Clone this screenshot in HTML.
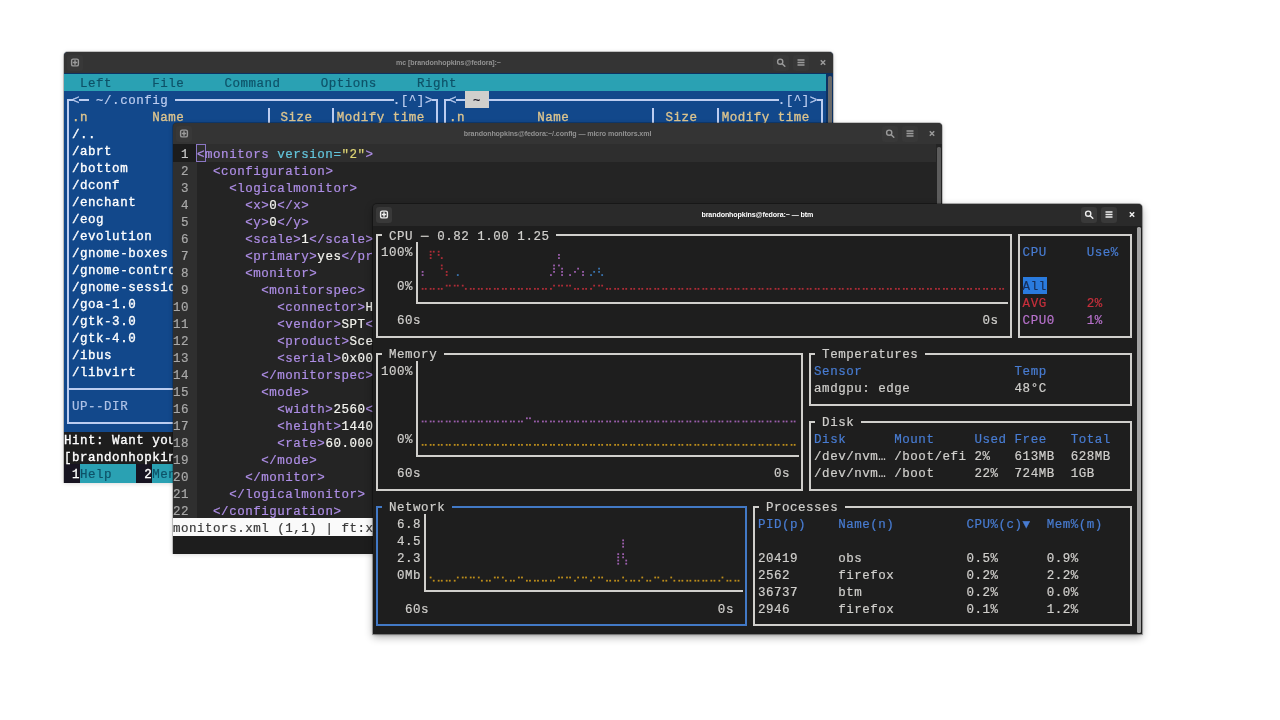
<!DOCTYPE html>
<html lang="en"><head><meta charset="utf-8"><title>Terminal windows: mc, micro, btm</title>
<style>
html,body{margin:0;padding:0}
body{width:1280px;height:720px;overflow:hidden;background:#fff;position:relative;font-family:"Liberation Mono", "DejaVu Sans Mono", monospace;font-size:12.5px;line-height:16.98px;color:#d0cfcc;letter-spacing:0.519px}
.win{position:absolute;border-radius:4px 4px 0 0;overflow:visible}
.term,.tt{will-change:transform}
.clip{position:absolute;left:0;top:0;right:0;bottom:0;overflow:hidden;border-radius:4px 4px 0 0}
.tbw{position:absolute;left:0;top:0;right:0;height:22px;border-radius:4px 4px 0 0}
.tb{position:absolute;left:0;top:0;right:0;height:22px}
.tt{position:absolute;left:0;right:0;top:0;height:22px;line-height:22px;text-align:center;font-family:"Liberation Sans","DejaVu Sans",sans-serif;font-weight:bold;font-size:7.1px;letter-spacing:-0.1px;white-space:nowrap}
.btn{position:absolute;border-radius:3px}
.btn svg{display:block}
.term{position:absolute;width:763px;height:410px;overflow:hidden}
.term div{position:absolute}
.term span{position:absolute;display:block;white-space:pre;height:17px;line-height:17px;-webkit-text-stroke:0.2px currentColor}
.term span.b{-webkit-text-stroke:0.34px currentColor}

.dots{position:absolute;left:0;top:0;opacity:.85}
.sb{position:absolute;border-radius:1.5px}
</style></head><body>
<div class="win" style="left:64px;top:51.75px;width:769px;height:430.25px;background:#0d3262;box-shadow:0 0 0 1px rgba(0,0,0,.2),0 1px 5px rgba(0,0,0,.2)">
<div class="tbw" style="background:#343434;height:21.55px">
<div class="tb">
<div class="btn" style="left:3px;top:3.3px;width:16px;height:16px;background:#383838">
<svg width="16" height="16" viewBox="-0.5 0 16 16"><rect x="4.1" y="4.1" width="6.8" height="6.8" rx="1.5" fill="none" stroke="#9a9a9a" stroke-width="1.4"/><path d="M7.5 5.3v4.4M5.3 7.5h4.4" stroke="#9a9a9a" stroke-width="1.5" fill="none"/></svg></div>
<div class="tt" style="color:#919191;top:0px">mc [brandonhopkins@fedora]:~</div>
<div class="btn" style="right:44.4px;top:3.3px;width:16px;height:16px;background:#383838">
<svg width="16" height="16" viewBox="-0.5 0 16 16"><circle cx="6.7" cy="6.7" r="2.6" fill="none" stroke="#9a9a9a" stroke-width="1.4"/><path d="M8.7 8.7l2.6 2.6" stroke="#9a9a9a" stroke-width="1.5" stroke-linecap="round"/></svg></div>
<div class="btn" style="right:24.3px;top:3.3px;width:16px;height:16px;background:#383838">
<svg width="16" height="16" viewBox="-0.5 0 16 16"><path d="M4 5h7M4 7.5h7M4 10h7" stroke="#9a9a9a" stroke-width="1.4"/></svg></div>
<div class="btn" style="right:1.8px;top:3.1px;width:16px;height:16px">
<svg width="16" height="16" viewBox="-0.5 0 16 16"><path d="M5.3 5.3l4.4 4.4M9.7 5.3l-4.4 4.4" stroke="#9a9a9a" stroke-width="1.5"/></svg></div>
</div>
</div>
<div class="term mc" style="left:0px;top:21.25px">
<div style="left:0px;top:0.75px;width:762px;height:16.98px;background:#2aa1b3"></div>
<div style="left:0px;top:17.73px;width:762px;height:340.8px;background:#12488b"></div>
<div style="left:0px;top:358.53px;width:762px;height:32.96px;background:#1d1d1d"></div>
<div style="left:0px;top:391.29px;width:762px;height:18.98px;background:#171421"></div>
<div style="left:3.01px;top:26.02px;width:2px;height:324.62px;background:#bccdf0"></div>
<div style="left:371.93px;top:26.02px;width:2px;height:324.62px;background:#bccdf0"></div>
<div style="left:3.01px;top:348.64px;width:370.92px;height:2px;background:#bccdf0"></div>
<div style="left:3.01px;top:314.68px;width:370.92px;height:2px;background:#bccdf0"></div>
<div style="left:3.01px;top:26.02px;width:6.01px;height:2px;background:#bccdf0"></div>
<div style="left:15.04px;top:26.02px;width:10.02px;height:2px;background:#bccdf0"></div>
<div style="left:111.28px;top:26.02px;width:218.54px;height:2px;background:#bccdf0"></div>
<div style="left:367.92px;top:26.02px;width:6.01px;height:2px;background:#bccdf0"></div>
<div style="left:203.51px;top:34.51px;width:2px;height:273.68px;background:#bccdf0"></div>
<div style="left:267.67px;top:34.51px;width:2px;height:273.68px;background:#bccdf0"></div>
<div style="left:379.95px;top:26.02px;width:2px;height:324.62px;background:#bccdf0"></div>
<div style="left:756.89px;top:26.02px;width:2px;height:324.62px;background:#bccdf0"></div>
<div style="left:379.95px;top:348.64px;width:378.94px;height:2px;background:#bccdf0"></div>
<div style="left:379.95px;top:314.68px;width:378.94px;height:2px;background:#bccdf0"></div>
<div style="left:379.95px;top:26.02px;width:6.01px;height:2px;background:#bccdf0"></div>
<div style="left:391.98px;top:26.02px;width:10.02px;height:2px;background:#bccdf0"></div>
<div style="left:401px;top:17.73px;width:24.06px;height:16.98px;background:#d0cfcc"></div>
<div style="left:424.06px;top:26.02px;width:290.72px;height:2px;background:#bccdf0"></div>
<div style="left:752.88px;top:26.02px;width:6.01px;height:2px;background:#bccdf0"></div>
<div style="left:588.47px;top:34.51px;width:2px;height:273.68px;background:#bccdf0"></div>
<div style="left:652.63px;top:34.51px;width:2px;height:273.68px;background:#bccdf0"></div>
<div style="left:16.04px;top:391.29px;width:56.14px;height:18.98px;background:#2aa1b3"></div>
<div style="left:88.22px;top:391.29px;width:56.14px;height:18.98px;background:#2aa1b3"></div>
<span style="left:16.04px;top:3.25px;color:#0e5268">Left</span>
<span style="left:88.22px;top:3.25px;color:#0e5268">File</span>
<span style="left:160.4px;top:3.25px;color:#0e5268">Command</span>
<span style="left:256.64px;top:3.25px;color:#0e5268">Options</span>
<span style="left:352.88px;top:3.25px;color:#0e5268">Right</span>
<span style="left:8.02px;top:20.23px;color:#bccdf0">&lt;</span>
<span style="left:32.08px;top:20.23px;color:#bccdf0">~/.config</span>
<span style="left:328.82px;top:20.23px;color:#bccdf0">.[^]&gt;</span>
<span class="b" style="left:8.02px;top:37.21px;color:#dcc48e">.n</span>
<span class="b" style="left:88.22px;top:37.21px;color:#dcc48e">Name</span>
<span class="b" style="left:216.54px;top:37.21px;color:#dcc48e">Size</span>
<span class="b" style="left:272.68px;top:37.21px;color:#dcc48e">Modify</span>
<span class="b" style="left:328.82px;top:37.21px;color:#dcc48e">time</span>
<span style="left:384.96px;top:20.23px;color:#bccdf0">&lt;</span>
<span style="left:409.02px;top:20.23px;color:#171421">~</span>
<span style="left:713.78px;top:20.23px;color:#bccdf0">.[^]&gt;</span>
<span class="b" style="left:384.96px;top:37.21px;color:#dcc48e">.n</span>
<span class="b" style="left:473.18px;top:37.21px;color:#dcc48e">Name</span>
<span class="b" style="left:601.5px;top:37.21px;color:#dcc48e">Size</span>
<span class="b" style="left:657.64px;top:37.21px;color:#dcc48e">Modify</span>
<span class="b" style="left:713.78px;top:37.21px;color:#dcc48e">time</span>
<span class="b" style="left:8.02px;top:54.19px;color:#ffffff">/..</span>
<span class="b" style="left:8.02px;top:71.17px;color:#ffffff">/abrt</span>
<span class="b" style="left:8.02px;top:88.15px;color:#ffffff">/bottom</span>
<span class="b" style="left:8.02px;top:105.13px;color:#ffffff">/dconf</span>
<span class="b" style="left:8.02px;top:122.11px;color:#ffffff">/enchant</span>
<span class="b" style="left:8.02px;top:139.09px;color:#ffffff">/eog</span>
<span class="b" style="left:8.02px;top:156.07px;color:#ffffff">/evolution</span>
<span class="b" style="left:8.02px;top:173.05px;color:#ffffff">/gnome-boxes</span>
<span class="b" style="left:8.02px;top:190.03px;color:#ffffff">/gnome-contro</span>
<span class="b" style="left:8.02px;top:207.01px;color:#ffffff">/gnome-sessio</span>
<span class="b" style="left:8.02px;top:223.99px;color:#ffffff">/goa-1.0</span>
<span class="b" style="left:8.02px;top:240.97px;color:#ffffff">/gtk-3.0</span>
<span class="b" style="left:8.02px;top:257.95px;color:#ffffff">/gtk-4.0</span>
<span class="b" style="left:8.02px;top:274.93px;color:#ffffff">/ibus</span>
<span class="b" style="left:8.02px;top:291.91px;color:#ffffff">/libvirt</span>
<span style="left:8.02px;top:325.87px;color:#aec2e6">UP--DIR</span>
<span class="b" style="left:0px;top:359.83px;color:#ffffff">Hint:</span>
<span class="b" style="left:48.12px;top:359.83px;color:#ffffff">Want</span>
<span class="b" style="left:88.22px;top:359.83px;color:#ffffff">you</span>
<span class="b" style="left:0px;top:376.81px;color:#ffffff">[brandonhopkin</span>
<span class="b" style="left:8.02px;top:393.79px;color:#ffffff">1</span>
<span style="left:16.04px;top:393.79px;color:#0e5268">Help</span>
<span class="b" style="left:80.2px;top:393.79px;color:#ffffff">2</span>
<span style="left:88.22px;top:393.79px;color:#0e5268">Menu</span>
</div>
<div class="sb" style="left:764px;top:24px;width:4px;height:400px;background:#6a6a6a"></div>
</div>
<div class="win" style="left:173px;top:122.5px;width:769px;height:430px;background:#242424;box-shadow:0 0 0 1px rgba(0,0,0,.2),0 1px 5px rgba(0,0,0,.2)">
<div class="tbw" style="background:#343434;height:21.8px">
<div class="tb">
<div class="btn" style="left:3px;top:3.3px;width:16px;height:16px;background:#383838">
<svg width="16" height="16" viewBox="-0.5 0 16 16"><rect x="4.1" y="4.1" width="6.8" height="6.8" rx="1.5" fill="none" stroke="#9a9a9a" stroke-width="1.4"/><path d="M7.5 5.3v4.4M5.3 7.5h4.4" stroke="#9a9a9a" stroke-width="1.5" fill="none"/></svg></div>
<div class="tt" style="color:#919191;top:0px">brandonhopkins@fedora:~/.config — micro monitors.xml</div>
<div class="btn" style="right:44.4px;top:3.3px;width:16px;height:16px;background:#383838">
<svg width="16" height="16" viewBox="-0.5 0 16 16"><circle cx="6.7" cy="6.7" r="2.6" fill="none" stroke="#9a9a9a" stroke-width="1.4"/><path d="M8.7 8.7l2.6 2.6" stroke="#9a9a9a" stroke-width="1.5" stroke-linecap="round"/></svg></div>
<div class="btn" style="right:24.3px;top:3.3px;width:16px;height:16px;background:#383838">
<svg width="16" height="16" viewBox="-0.5 0 16 16"><path d="M4 5h7M4 7.5h7M4 10h7" stroke="#9a9a9a" stroke-width="1.4"/></svg></div>
<div class="btn" style="right:1.8px;top:3.1px;width:16px;height:16px">
<svg width="16" height="16" viewBox="-0.5 0 16 16"><path d="M5.3 5.3l4.4 4.4M9.7 5.3l-4.4 4.4" stroke="#9a9a9a" stroke-width="1.5"/></svg></div>
</div>
</div>
<div class="term " style="left:0px;top:21.5px">
<div style="left:0px;top:0.5px;width:24.06px;height:373.56px;background:#2f2f2f"></div>
<div style="left:0;top:0;width:24.06px;height:18px;background:#1c1c1c"></div>
<div style="left:24.06px;top:0;width:770px;height:18px;background:#2e2e2e"></div>
<div style="left:0px;top:374.46px;width:770px;height:17.28px;background:#fafafa"></div>
<div style="left:0px;top:391.74px;width:770px;height:17.98px;background:#1d1d1d"></div>
<div style="left:23.06px;top:0.2px;width:9.62px;height:18.18px;border:1.3px solid #8a76c4;box-sizing:border-box"></div>
<span style="left:8.02px;top:3px;color:#c9c9c9">1</span>
<span style="left:24.06px;top:3px;color:#ae8ee6">&lt;monitors</span>
<span style="left:104.26px;top:3px;color:#63c5dc">version=</span>
<span style="left:168.42px;top:3px;color:#dfd574">"2"</span>
<span style="left:192.48px;top:3px;color:#ae8ee6">&gt;</span>
<span style="left:8.02px;top:19.98px;color:#a9a9a9">2</span>
<span style="left:40.1px;top:19.98px;color:#ae8ee6">&lt;configuration&gt;</span>
<span style="left:8.02px;top:36.96px;color:#a9a9a9">3</span>
<span style="left:56.14px;top:36.96px;color:#ae8ee6">&lt;logicalmonitor&gt;</span>
<span style="left:8.02px;top:53.94px;color:#a9a9a9">4</span>
<span style="left:72.18px;top:53.94px;color:#ae8ee6">&lt;x&gt;</span>
<span style="left:96.24px;top:53.94px;color:#f4f4ef">0</span>
<span style="left:104.26px;top:53.94px;color:#ae8ee6">&lt;/x&gt;</span>
<span style="left:8.02px;top:70.92px;color:#a9a9a9">5</span>
<span style="left:72.18px;top:70.92px;color:#ae8ee6">&lt;y&gt;</span>
<span style="left:96.24px;top:70.92px;color:#f4f4ef">0</span>
<span style="left:104.26px;top:70.92px;color:#ae8ee6">&lt;/y&gt;</span>
<span style="left:8.02px;top:87.9px;color:#a9a9a9">6</span>
<span style="left:72.18px;top:87.9px;color:#ae8ee6">&lt;scale&gt;</span>
<span style="left:128.32px;top:87.9px;color:#f4f4ef">1</span>
<span style="left:136.34px;top:87.9px;color:#ae8ee6">&lt;/scale&gt;</span>
<span style="left:8.02px;top:104.88px;color:#a9a9a9">7</span>
<span style="left:72.18px;top:104.88px;color:#ae8ee6">&lt;primary&gt;</span>
<span style="left:144.36px;top:104.88px;color:#f4f4ef">yes</span>
<span style="left:168.42px;top:104.88px;color:#ae8ee6">&lt;/pr</span>
<span style="left:8.02px;top:121.86px;color:#a9a9a9">8</span>
<span style="left:72.18px;top:121.86px;color:#ae8ee6">&lt;monitor&gt;</span>
<span style="left:8.02px;top:138.84px;color:#a9a9a9">9</span>
<span style="left:88.22px;top:138.84px;color:#ae8ee6">&lt;monitorspec&gt;</span>
<span style="left:0px;top:155.82px;color:#a9a9a9">10</span>
<span style="left:104.26px;top:155.82px;color:#ae8ee6">&lt;connector&gt;</span>
<span style="left:192.48px;top:155.82px;color:#f4f4ef">H</span>
<span style="left:0px;top:172.8px;color:#a9a9a9">11</span>
<span style="left:104.26px;top:172.8px;color:#ae8ee6">&lt;vendor&gt;</span>
<span style="left:168.42px;top:172.8px;color:#f4f4ef">SPT</span>
<span style="left:192.48px;top:172.8px;color:#ae8ee6">&lt;</span>
<span style="left:0px;top:189.78px;color:#a9a9a9">12</span>
<span style="left:104.26px;top:189.78px;color:#ae8ee6">&lt;product&gt;</span>
<span style="left:176.44px;top:189.78px;color:#f4f4ef">Sce</span>
<span style="left:0px;top:206.76px;color:#a9a9a9">13</span>
<span style="left:104.26px;top:206.76px;color:#ae8ee6">&lt;serial&gt;</span>
<span style="left:168.42px;top:206.76px;color:#f4f4ef">0x00</span>
<span style="left:0px;top:223.74px;color:#a9a9a9">14</span>
<span style="left:88.22px;top:223.74px;color:#ae8ee6">&lt;/monitorspec&gt;</span>
<span style="left:0px;top:240.72px;color:#a9a9a9">15</span>
<span style="left:88.22px;top:240.72px;color:#ae8ee6">&lt;mode&gt;</span>
<span style="left:0px;top:257.7px;color:#a9a9a9">16</span>
<span style="left:104.26px;top:257.7px;color:#ae8ee6">&lt;width&gt;</span>
<span style="left:160.4px;top:257.7px;color:#f4f4ef">2560</span>
<span style="left:192.48px;top:257.7px;color:#ae8ee6">&lt;</span>
<span style="left:0px;top:274.68px;color:#a9a9a9">17</span>
<span style="left:104.26px;top:274.68px;color:#ae8ee6">&lt;height&gt;</span>
<span style="left:168.42px;top:274.68px;color:#f4f4ef">1440</span>
<span style="left:0px;top:291.66px;color:#a9a9a9">18</span>
<span style="left:104.26px;top:291.66px;color:#ae8ee6">&lt;rate&gt;</span>
<span style="left:152.38px;top:291.66px;color:#f4f4ef">60.000</span>
<span style="left:0px;top:308.64px;color:#a9a9a9">19</span>
<span style="left:88.22px;top:308.64px;color:#ae8ee6">&lt;/mode&gt;</span>
<span style="left:0px;top:325.62px;color:#a9a9a9">20</span>
<span style="left:72.18px;top:325.62px;color:#ae8ee6">&lt;/monitor&gt;</span>
<span style="left:0px;top:342.6px;color:#a9a9a9">21</span>
<span style="left:56.14px;top:342.6px;color:#ae8ee6">&lt;/logicalmonitor&gt;</span>
<span style="left:0px;top:359.58px;color:#a9a9a9">22</span>
<span style="left:40.1px;top:359.58px;color:#ae8ee6">&lt;/configuration&gt;</span>
<span style="left:0px;top:376.56px;color:#3a3a3a">monitors.xml</span>
<span style="left:104.26px;top:376.56px;color:#3a3a3a">(1,1)</span>
<span style="left:152.38px;top:376.56px;color:#3a3a3a">|</span>
<span style="left:168.42px;top:376.56px;color:#3a3a3a">ft:x</span>
</div>
<div class="sb" style="left:764.3px;top:24px;width:4.2px;height:400px;background:#5c5c5c"></div>
</div>
<div class="win" style="left:373px;top:203.6px;width:768.7px;height:430.1px;background:#1e1e1e;box-shadow:0 0 0 1px rgba(0,0,0,.28),0 3px 9px rgba(0,0,0,.32),0 1px 3px rgba(0,0,0,.25)">
<div class="tbw" style="background:#2a2a2a;height:22.7px">
<div class="tb">
<div class="btn" style="left:3px;top:3.3px;width:16px;height:16px;background:#393939">
<svg width="16" height="16" viewBox="-0.5 0 16 16"><rect x="4.1" y="4.1" width="6.8" height="6.8" rx="1.5" fill="none" stroke="#eeeeee" stroke-width="1.4"/><path d="M7.5 5.3v4.4M5.3 7.5h4.4" stroke="#eeeeee" stroke-width="1.5" fill="none"/></svg></div>
<div class="tt" style="color:#ffffff;top:0.5px">brandonhopkins@fedora:~ — btm</div>
<div class="btn" style="right:44.4px;top:3.3px;width:16px;height:16px;background:#393939">
<svg width="16" height="16" viewBox="-0.5 0 16 16"><circle cx="6.7" cy="6.7" r="2.6" fill="none" stroke="#eeeeee" stroke-width="1.4"/><path d="M8.7 8.7l2.6 2.6" stroke="#eeeeee" stroke-width="1.5" stroke-linecap="round"/></svg></div>
<div class="btn" style="right:24.3px;top:3.3px;width:16px;height:16px;background:#393939">
<svg width="16" height="16" viewBox="-0.5 0 16 16"><path d="M4 5h7M4 7.5h7M4 10h7" stroke="#eeeeee" stroke-width="1.4"/></svg></div>
<div class="btn" style="right:1.8px;top:3.1px;width:16px;height:16px">
<svg width="16" height="16" viewBox="-0.5 0 16 16"><path d="M5.3 5.3l4.4 4.4M9.7 5.3l-4.4 4.4" stroke="#eeeeee" stroke-width="1.5"/></svg></div>
</div>
</div>
<div class="term bt" style="left:0px;top:22.4px">
<div style="left:3.01px;top:7.89px;width:2px;height:103.88px;background:#d0cfcc"></div>
<div style="left:636.59px;top:7.89px;width:2px;height:103.88px;background:#d0cfcc"></div>
<div style="left:3.01px;top:109.77px;width:635.58px;height:2px;background:#d0cfcc"></div>
<div style="left:3.01px;top:7.89px;width:6.01px;height:2px;background:#d0cfcc"></div>
<div style="left:183.46px;top:7.89px;width:455.13px;height:2px;background:#d0cfcc"></div>
<div style="left:43.11px;top:16.38px;width:2px;height:61.43px;background:#d0cfcc"></div>
<div style="left:43.11px;top:75.81px;width:591.47px;height:2px;background:#d0cfcc"></div>
<div style="left:644.61px;top:7.89px;width:2px;height:103.88px;background:#d0cfcc"></div>
<div style="left:756.89px;top:7.89px;width:2px;height:103.88px;background:#d0cfcc"></div>
<div style="left:644.61px;top:109.77px;width:114.28px;height:2px;background:#d0cfcc"></div>
<div style="left:644.61px;top:7.89px;width:114.28px;height:2px;background:#d0cfcc"></div>
<div style="left:649.62px;top:50.94px;width:24.06px;height:16.98px;background:#2a7bde"></div>
<div style="left:3.01px;top:126.75px;width:2px;height:137.84px;background:#d0cfcc"></div>
<div style="left:428.07px;top:126.75px;width:2px;height:137.84px;background:#d0cfcc"></div>
<div style="left:3.01px;top:262.59px;width:427.06px;height:2px;background:#d0cfcc"></div>
<div style="left:3.01px;top:126.75px;width:6.01px;height:2px;background:#d0cfcc"></div>
<div style="left:71.18px;top:126.75px;width:358.89px;height:2px;background:#d0cfcc"></div>
<div style="left:43.11px;top:135.24px;width:2px;height:95.39px;background:#d0cfcc"></div>
<div style="left:43.11px;top:228.63px;width:382.95px;height:2px;background:#d0cfcc"></div>
<div style="left:436.09px;top:126.75px;width:2px;height:52.94px;background:#d0cfcc"></div>
<div style="left:756.89px;top:126.75px;width:2px;height:52.94px;background:#d0cfcc"></div>
<div style="left:436.09px;top:177.69px;width:322.8px;height:2px;background:#d0cfcc"></div>
<div style="left:436.09px;top:126.75px;width:6.01px;height:2px;background:#d0cfcc"></div>
<div style="left:552.38px;top:126.75px;width:206.51px;height:2px;background:#d0cfcc"></div>
<div style="left:436.09px;top:194.67px;width:2px;height:69.92px;background:#d0cfcc"></div>
<div style="left:756.89px;top:194.67px;width:2px;height:69.92px;background:#d0cfcc"></div>
<div style="left:436.09px;top:262.59px;width:322.8px;height:2px;background:#d0cfcc"></div>
<div style="left:436.09px;top:194.67px;width:6.01px;height:2px;background:#d0cfcc"></div>
<div style="left:488.22px;top:194.67px;width:270.67px;height:2px;background:#d0cfcc"></div>
<div style="left:3.01px;top:279.57px;width:2px;height:120.86px;background:#4279c6"></div>
<div style="left:371.93px;top:279.57px;width:2px;height:120.86px;background:#4279c6"></div>
<div style="left:3.01px;top:398.43px;width:370.92px;height:2px;background:#4279c6"></div>
<div style="left:3.01px;top:279.57px;width:6.01px;height:2px;background:#4279c6"></div>
<div style="left:79.2px;top:279.57px;width:294.73px;height:2px;background:#4279c6"></div>
<div style="left:51.13px;top:288.06px;width:2px;height:78.41px;background:#d0cfcc"></div>
<div style="left:51.13px;top:364.47px;width:318.79px;height:2px;background:#d0cfcc"></div>
<div style="left:379.95px;top:279.57px;width:2px;height:120.86px;background:#d0cfcc"></div>
<div style="left:756.89px;top:279.57px;width:2px;height:120.86px;background:#d0cfcc"></div>
<div style="left:379.95px;top:398.43px;width:378.94px;height:2px;background:#d0cfcc"></div>
<div style="left:379.95px;top:279.57px;width:6.01px;height:2px;background:#d0cfcc"></div>
<div style="left:472.18px;top:279.57px;width:286.71px;height:2px;background:#d0cfcc"></div>
<svg class="dots" width="763" height="409" viewBox="0 0 763 409">
<rect x="48.72" y="61.94" width="1.8" height="1.8" fill="#c8303c"/>
<rect x="51.82" y="61.94" width="1.8" height="1.8" fill="#c8303c"/>
<rect x="56.74" y="61.94" width="1.8" height="1.8" fill="#c8303c"/>
<rect x="59.84" y="61.94" width="1.8" height="1.8" fill="#c8303c"/>
<rect x="64.76" y="61.94" width="1.8" height="1.8" fill="#c8303c"/>
<rect x="67.86" y="61.94" width="1.8" height="1.8" fill="#c8303c"/>
<rect x="72.78" y="58.74" width="1.8" height="1.8" fill="#c8303c"/>
<rect x="75.88" y="58.74" width="1.8" height="1.8" fill="#c8303c"/>
<rect x="80.8" y="58.74" width="1.8" height="1.8" fill="#c8303c"/>
<rect x="83.9" y="58.74" width="1.8" height="1.8" fill="#c8303c"/>
<rect x="88.82" y="58.74" width="1.8" height="1.8" fill="#c8303c"/>
<rect x="91.92" y="61.94" width="1.8" height="1.8" fill="#c8303c"/>
<rect x="96.84" y="61.94" width="1.8" height="1.8" fill="#c8303c"/>
<rect x="99.94" y="61.94" width="1.8" height="1.8" fill="#c8303c"/>
<rect x="104.86" y="61.94" width="1.8" height="1.8" fill="#c8303c"/>
<rect x="107.96" y="61.94" width="1.8" height="1.8" fill="#c8303c"/>
<rect x="112.88" y="61.94" width="1.8" height="1.8" fill="#c8303c"/>
<rect x="115.98" y="61.94" width="1.8" height="1.8" fill="#c8303c"/>
<rect x="120.9" y="61.94" width="1.8" height="1.8" fill="#c8303c"/>
<rect x="124" y="61.94" width="1.8" height="1.8" fill="#c8303c"/>
<rect x="128.92" y="61.94" width="1.8" height="1.8" fill="#c8303c"/>
<rect x="132.02" y="61.94" width="1.8" height="1.8" fill="#c8303c"/>
<rect x="136.94" y="61.94" width="1.8" height="1.8" fill="#c8303c"/>
<rect x="140.04" y="61.94" width="1.8" height="1.8" fill="#c8303c"/>
<rect x="144.96" y="61.94" width="1.8" height="1.8" fill="#c8303c"/>
<rect x="148.06" y="61.94" width="1.8" height="1.8" fill="#c8303c"/>
<rect x="152.98" y="61.94" width="1.8" height="1.8" fill="#c8303c"/>
<rect x="156.08" y="61.94" width="1.8" height="1.8" fill="#c8303c"/>
<rect x="161" y="61.94" width="1.8" height="1.8" fill="#c8303c"/>
<rect x="164.1" y="61.94" width="1.8" height="1.8" fill="#c8303c"/>
<rect x="169.02" y="61.94" width="1.8" height="1.8" fill="#c8303c"/>
<rect x="172.12" y="61.94" width="1.8" height="1.8" fill="#c8303c"/>
<rect x="177.04" y="61.94" width="1.8" height="1.8" fill="#c8303c"/>
<rect x="180.14" y="58.74" width="1.8" height="1.8" fill="#c8303c"/>
<rect x="185.06" y="58.74" width="1.8" height="1.8" fill="#c8303c"/>
<rect x="188.16" y="58.74" width="1.8" height="1.8" fill="#c8303c"/>
<rect x="193.08" y="58.74" width="1.8" height="1.8" fill="#c8303c"/>
<rect x="196.18" y="58.74" width="1.8" height="1.8" fill="#c8303c"/>
<rect x="201.1" y="61.94" width="1.8" height="1.8" fill="#c8303c"/>
<rect x="204.2" y="61.94" width="1.8" height="1.8" fill="#c8303c"/>
<rect x="209.12" y="61.94" width="1.8" height="1.8" fill="#c8303c"/>
<rect x="212.22" y="61.94" width="1.8" height="1.8" fill="#c8303c"/>
<rect x="217.14" y="61.94" width="1.8" height="1.8" fill="#c8303c"/>
<rect x="220.24" y="58.74" width="1.8" height="1.8" fill="#c8303c"/>
<rect x="225.16" y="58.74" width="1.8" height="1.8" fill="#c8303c"/>
<rect x="228.26" y="58.74" width="1.8" height="1.8" fill="#c8303c"/>
<rect x="233.18" y="61.94" width="1.8" height="1.8" fill="#c8303c"/>
<rect x="236.28" y="61.94" width="1.8" height="1.8" fill="#c8303c"/>
<rect x="241.2" y="61.94" width="1.8" height="1.8" fill="#c8303c"/>
<rect x="244.3" y="61.94" width="1.8" height="1.8" fill="#c8303c"/>
<rect x="249.22" y="61.94" width="1.8" height="1.8" fill="#c8303c"/>
<rect x="252.32" y="61.94" width="1.8" height="1.8" fill="#c8303c"/>
<rect x="257.24" y="61.94" width="1.8" height="1.8" fill="#c8303c"/>
<rect x="260.34" y="61.94" width="1.8" height="1.8" fill="#c8303c"/>
<rect x="265.26" y="61.94" width="1.8" height="1.8" fill="#c8303c"/>
<rect x="268.36" y="61.94" width="1.8" height="1.8" fill="#c8303c"/>
<rect x="273.28" y="61.94" width="1.8" height="1.8" fill="#c8303c"/>
<rect x="276.38" y="61.94" width="1.8" height="1.8" fill="#c8303c"/>
<rect x="281.3" y="61.94" width="1.8" height="1.8" fill="#c8303c"/>
<rect x="284.4" y="61.94" width="1.8" height="1.8" fill="#c8303c"/>
<rect x="289.32" y="61.94" width="1.8" height="1.8" fill="#c8303c"/>
<rect x="292.42" y="61.94" width="1.8" height="1.8" fill="#c8303c"/>
<rect x="297.34" y="61.94" width="1.8" height="1.8" fill="#c8303c"/>
<rect x="300.44" y="61.94" width="1.8" height="1.8" fill="#c8303c"/>
<rect x="305.36" y="61.94" width="1.8" height="1.8" fill="#c8303c"/>
<rect x="308.46" y="61.94" width="1.8" height="1.8" fill="#c8303c"/>
<rect x="313.38" y="61.94" width="1.8" height="1.8" fill="#c8303c"/>
<rect x="316.48" y="61.94" width="1.8" height="1.8" fill="#c8303c"/>
<rect x="321.4" y="61.94" width="1.8" height="1.8" fill="#c8303c"/>
<rect x="324.5" y="61.94" width="1.8" height="1.8" fill="#c8303c"/>
<rect x="329.42" y="61.94" width="1.8" height="1.8" fill="#c8303c"/>
<rect x="332.52" y="61.94" width="1.8" height="1.8" fill="#c8303c"/>
<rect x="337.44" y="61.94" width="1.8" height="1.8" fill="#c8303c"/>
<rect x="340.54" y="61.94" width="1.8" height="1.8" fill="#c8303c"/>
<rect x="345.46" y="61.94" width="1.8" height="1.8" fill="#c8303c"/>
<rect x="348.56" y="61.94" width="1.8" height="1.8" fill="#c8303c"/>
<rect x="353.48" y="61.94" width="1.8" height="1.8" fill="#c8303c"/>
<rect x="356.58" y="61.94" width="1.8" height="1.8" fill="#c8303c"/>
<rect x="361.5" y="61.94" width="1.8" height="1.8" fill="#c8303c"/>
<rect x="364.6" y="61.94" width="1.8" height="1.8" fill="#c8303c"/>
<rect x="369.52" y="61.94" width="1.8" height="1.8" fill="#c8303c"/>
<rect x="372.62" y="61.94" width="1.8" height="1.8" fill="#c8303c"/>
<rect x="377.54" y="61.94" width="1.8" height="1.8" fill="#c8303c"/>
<rect x="380.64" y="61.94" width="1.8" height="1.8" fill="#c8303c"/>
<rect x="385.56" y="61.94" width="1.8" height="1.8" fill="#c8303c"/>
<rect x="388.66" y="61.94" width="1.8" height="1.8" fill="#c8303c"/>
<rect x="393.58" y="61.94" width="1.8" height="1.8" fill="#c8303c"/>
<rect x="396.68" y="61.94" width="1.8" height="1.8" fill="#c8303c"/>
<rect x="401.6" y="61.94" width="1.8" height="1.8" fill="#c8303c"/>
<rect x="404.7" y="61.94" width="1.8" height="1.8" fill="#c8303c"/>
<rect x="409.62" y="61.94" width="1.8" height="1.8" fill="#c8303c"/>
<rect x="412.72" y="61.94" width="1.8" height="1.8" fill="#c8303c"/>
<rect x="417.64" y="61.94" width="1.8" height="1.8" fill="#c8303c"/>
<rect x="420.74" y="61.94" width="1.8" height="1.8" fill="#c8303c"/>
<rect x="425.66" y="61.94" width="1.8" height="1.8" fill="#c8303c"/>
<rect x="428.76" y="61.94" width="1.8" height="1.8" fill="#c8303c"/>
<rect x="433.68" y="61.94" width="1.8" height="1.8" fill="#c8303c"/>
<rect x="436.78" y="61.94" width="1.8" height="1.8" fill="#c8303c"/>
<rect x="441.7" y="61.94" width="1.8" height="1.8" fill="#c8303c"/>
<rect x="444.8" y="61.94" width="1.8" height="1.8" fill="#c8303c"/>
<rect x="449.72" y="61.94" width="1.8" height="1.8" fill="#c8303c"/>
<rect x="452.82" y="61.94" width="1.8" height="1.8" fill="#c8303c"/>
<rect x="457.74" y="61.94" width="1.8" height="1.8" fill="#c8303c"/>
<rect x="460.84" y="61.94" width="1.8" height="1.8" fill="#c8303c"/>
<rect x="465.76" y="61.94" width="1.8" height="1.8" fill="#c8303c"/>
<rect x="468.86" y="61.94" width="1.8" height="1.8" fill="#c8303c"/>
<rect x="473.78" y="61.94" width="1.8" height="1.8" fill="#c8303c"/>
<rect x="476.88" y="61.94" width="1.8" height="1.8" fill="#c8303c"/>
<rect x="481.8" y="61.94" width="1.8" height="1.8" fill="#c8303c"/>
<rect x="484.9" y="61.94" width="1.8" height="1.8" fill="#c8303c"/>
<rect x="489.82" y="61.94" width="1.8" height="1.8" fill="#c8303c"/>
<rect x="492.92" y="61.94" width="1.8" height="1.8" fill="#c8303c"/>
<rect x="497.84" y="61.94" width="1.8" height="1.8" fill="#c8303c"/>
<rect x="500.94" y="61.94" width="1.8" height="1.8" fill="#c8303c"/>
<rect x="505.86" y="61.94" width="1.8" height="1.8" fill="#c8303c"/>
<rect x="508.96" y="61.94" width="1.8" height="1.8" fill="#c8303c"/>
<rect x="513.88" y="61.94" width="1.8" height="1.8" fill="#c8303c"/>
<rect x="516.98" y="61.94" width="1.8" height="1.8" fill="#c8303c"/>
<rect x="521.9" y="61.94" width="1.8" height="1.8" fill="#c8303c"/>
<rect x="525" y="61.94" width="1.8" height="1.8" fill="#c8303c"/>
<rect x="529.92" y="61.94" width="1.8" height="1.8" fill="#c8303c"/>
<rect x="533.02" y="61.94" width="1.8" height="1.8" fill="#c8303c"/>
<rect x="537.94" y="61.94" width="1.8" height="1.8" fill="#c8303c"/>
<rect x="541.04" y="61.94" width="1.8" height="1.8" fill="#c8303c"/>
<rect x="545.96" y="61.94" width="1.8" height="1.8" fill="#c8303c"/>
<rect x="549.06" y="61.94" width="1.8" height="1.8" fill="#c8303c"/>
<rect x="553.98" y="61.94" width="1.8" height="1.8" fill="#c8303c"/>
<rect x="557.08" y="61.94" width="1.8" height="1.8" fill="#c8303c"/>
<rect x="562" y="61.94" width="1.8" height="1.8" fill="#c8303c"/>
<rect x="565.1" y="61.94" width="1.8" height="1.8" fill="#c8303c"/>
<rect x="570.02" y="61.94" width="1.8" height="1.8" fill="#c8303c"/>
<rect x="573.12" y="61.94" width="1.8" height="1.8" fill="#c8303c"/>
<rect x="578.04" y="61.94" width="1.8" height="1.8" fill="#c8303c"/>
<rect x="581.14" y="61.94" width="1.8" height="1.8" fill="#c8303c"/>
<rect x="586.06" y="61.94" width="1.8" height="1.8" fill="#c8303c"/>
<rect x="589.16" y="61.94" width="1.8" height="1.8" fill="#c8303c"/>
<rect x="594.08" y="61.94" width="1.8" height="1.8" fill="#c8303c"/>
<rect x="597.18" y="61.94" width="1.8" height="1.8" fill="#c8303c"/>
<rect x="602.1" y="61.94" width="1.8" height="1.8" fill="#c8303c"/>
<rect x="605.2" y="61.94" width="1.8" height="1.8" fill="#c8303c"/>
<rect x="610.12" y="61.94" width="1.8" height="1.8" fill="#c8303c"/>
<rect x="613.22" y="61.94" width="1.8" height="1.8" fill="#c8303c"/>
<rect x="618.14" y="61.94" width="1.8" height="1.8" fill="#c8303c"/>
<rect x="621.24" y="61.94" width="1.8" height="1.8" fill="#c8303c"/>
<rect x="626.16" y="61.94" width="1.8" height="1.8" fill="#c8303c"/>
<rect x="629.26" y="61.94" width="1.8" height="1.8" fill="#c8303c"/>
<rect x="56.74" y="24.78" width="1.8" height="1.8" fill="#c8303c"/>
<rect x="56.74" y="27.98" width="1.8" height="1.8" fill="#c8303c"/>
<rect x="56.74" y="31.18" width="1.8" height="1.8" fill="#c8303c"/>
<rect x="59.84" y="24.78" width="1.8" height="1.8" fill="#c8303c"/>
<rect x="64.76" y="24.78" width="1.8" height="1.8" fill="#c8303c"/>
<rect x="64.76" y="27.98" width="1.8" height="1.8" fill="#c8303c"/>
<rect x="67.86" y="31.18" width="1.8" height="1.8" fill="#c8303c"/>
<rect x="67.86" y="38.56" width="1.8" height="1.8" fill="#c8303c"/>
<rect x="67.86" y="41.76" width="1.8" height="1.8" fill="#c8303c"/>
<rect x="72.78" y="44.96" width="1.8" height="1.8" fill="#c8303c"/>
<rect x="72.78" y="48.16" width="1.8" height="1.8" fill="#c8303c"/>
<rect x="48.72" y="44.96" width="1.8" height="1.8" fill="#b26ac6"/>
<rect x="48.72" y="48.16" width="1.8" height="1.8" fill="#b26ac6"/>
<rect x="83.9" y="48.16" width="1.8" height="1.8" fill="#3f83c8"/>
<rect x="185.06" y="27.98" width="1.8" height="1.8" fill="#b26ac6"/>
<rect x="185.06" y="31.18" width="1.8" height="1.8" fill="#b26ac6"/>
<rect x="180.14" y="38.56" width="1.8" height="1.8" fill="#b26ac6"/>
<rect x="180.14" y="41.76" width="1.8" height="1.8" fill="#b26ac6"/>
<rect x="180.14" y="44.96" width="1.8" height="1.8" fill="#b26ac6"/>
<rect x="177.04" y="48.16" width="1.8" height="1.8" fill="#b26ac6"/>
<rect x="185.06" y="38.56" width="1.8" height="1.8" fill="#b26ac6"/>
<rect x="188.16" y="41.76" width="1.8" height="1.8" fill="#b26ac6"/>
<rect x="188.16" y="44.96" width="1.8" height="1.8" fill="#b26ac6"/>
<rect x="188.16" y="48.16" width="1.8" height="1.8" fill="#b26ac6"/>
<rect x="196.18" y="48.16" width="1.8" height="1.8" fill="#b26ac6"/>
<rect x="201.1" y="44.96" width="1.8" height="1.8" fill="#b26ac6"/>
<rect x="204.2" y="41.76" width="1.8" height="1.8" fill="#b26ac6"/>
<rect x="209.12" y="44.96" width="1.8" height="1.8" fill="#b26ac6"/>
<rect x="209.12" y="48.16" width="1.8" height="1.8" fill="#b26ac6"/>
<rect x="217.14" y="48.16" width="1.8" height="1.8" fill="#3f83c8"/>
<rect x="220.24" y="44.96" width="1.8" height="1.8" fill="#3f83c8"/>
<rect x="225.16" y="41.76" width="1.8" height="1.8" fill="#3f83c8"/>
<rect x="225.16" y="44.96" width="1.8" height="1.8" fill="#3f83c8"/>
<rect x="228.26" y="48.16" width="1.8" height="1.8" fill="#3f83c8"/>
<rect x="48.72" y="194.58" width="1.8" height="1.8" fill="#b26ac6"/>
<rect x="51.82" y="194.58" width="1.8" height="1.8" fill="#b26ac6"/>
<rect x="48.72" y="217.96" width="1.8" height="1.8" fill="#d9a21c"/>
<rect x="51.82" y="217.96" width="1.8" height="1.8" fill="#d9a21c"/>
<rect x="56.74" y="194.58" width="1.8" height="1.8" fill="#b26ac6"/>
<rect x="59.84" y="194.58" width="1.8" height="1.8" fill="#b26ac6"/>
<rect x="56.74" y="217.96" width="1.8" height="1.8" fill="#d9a21c"/>
<rect x="59.84" y="217.96" width="1.8" height="1.8" fill="#d9a21c"/>
<rect x="64.76" y="194.58" width="1.8" height="1.8" fill="#b26ac6"/>
<rect x="67.86" y="194.58" width="1.8" height="1.8" fill="#b26ac6"/>
<rect x="64.76" y="217.96" width="1.8" height="1.8" fill="#d9a21c"/>
<rect x="67.86" y="217.96" width="1.8" height="1.8" fill="#d9a21c"/>
<rect x="72.78" y="194.58" width="1.8" height="1.8" fill="#b26ac6"/>
<rect x="75.88" y="194.58" width="1.8" height="1.8" fill="#b26ac6"/>
<rect x="72.78" y="217.96" width="1.8" height="1.8" fill="#d9a21c"/>
<rect x="75.88" y="217.96" width="1.8" height="1.8" fill="#d9a21c"/>
<rect x="80.8" y="194.58" width="1.8" height="1.8" fill="#b26ac6"/>
<rect x="83.9" y="194.58" width="1.8" height="1.8" fill="#b26ac6"/>
<rect x="80.8" y="217.96" width="1.8" height="1.8" fill="#d9a21c"/>
<rect x="83.9" y="217.96" width="1.8" height="1.8" fill="#d9a21c"/>
<rect x="88.82" y="194.58" width="1.8" height="1.8" fill="#b26ac6"/>
<rect x="91.92" y="194.58" width="1.8" height="1.8" fill="#b26ac6"/>
<rect x="88.82" y="217.96" width="1.8" height="1.8" fill="#d9a21c"/>
<rect x="91.92" y="217.96" width="1.8" height="1.8" fill="#d9a21c"/>
<rect x="96.84" y="194.58" width="1.8" height="1.8" fill="#b26ac6"/>
<rect x="99.94" y="194.58" width="1.8" height="1.8" fill="#b26ac6"/>
<rect x="96.84" y="217.96" width="1.8" height="1.8" fill="#d9a21c"/>
<rect x="99.94" y="217.96" width="1.8" height="1.8" fill="#d9a21c"/>
<rect x="104.86" y="194.58" width="1.8" height="1.8" fill="#b26ac6"/>
<rect x="107.96" y="194.58" width="1.8" height="1.8" fill="#b26ac6"/>
<rect x="104.86" y="217.96" width="1.8" height="1.8" fill="#d9a21c"/>
<rect x="107.96" y="217.96" width="1.8" height="1.8" fill="#d9a21c"/>
<rect x="112.88" y="194.58" width="1.8" height="1.8" fill="#b26ac6"/>
<rect x="115.98" y="194.58" width="1.8" height="1.8" fill="#b26ac6"/>
<rect x="112.88" y="217.96" width="1.8" height="1.8" fill="#d9a21c"/>
<rect x="115.98" y="217.96" width="1.8" height="1.8" fill="#d9a21c"/>
<rect x="120.9" y="194.58" width="1.8" height="1.8" fill="#b26ac6"/>
<rect x="124" y="194.58" width="1.8" height="1.8" fill="#b26ac6"/>
<rect x="120.9" y="217.96" width="1.8" height="1.8" fill="#d9a21c"/>
<rect x="124" y="217.96" width="1.8" height="1.8" fill="#d9a21c"/>
<rect x="128.92" y="194.58" width="1.8" height="1.8" fill="#b26ac6"/>
<rect x="132.02" y="194.58" width="1.8" height="1.8" fill="#b26ac6"/>
<rect x="128.92" y="217.96" width="1.8" height="1.8" fill="#d9a21c"/>
<rect x="132.02" y="217.96" width="1.8" height="1.8" fill="#d9a21c"/>
<rect x="136.94" y="194.58" width="1.8" height="1.8" fill="#b26ac6"/>
<rect x="140.04" y="194.58" width="1.8" height="1.8" fill="#b26ac6"/>
<rect x="136.94" y="217.96" width="1.8" height="1.8" fill="#d9a21c"/>
<rect x="140.04" y="217.96" width="1.8" height="1.8" fill="#d9a21c"/>
<rect x="144.96" y="194.58" width="1.8" height="1.8" fill="#b26ac6"/>
<rect x="148.06" y="194.58" width="1.8" height="1.8" fill="#b26ac6"/>
<rect x="144.96" y="217.96" width="1.8" height="1.8" fill="#d9a21c"/>
<rect x="148.06" y="217.96" width="1.8" height="1.8" fill="#d9a21c"/>
<rect x="152.98" y="191.38" width="1.8" height="1.8" fill="#b26ac6"/>
<rect x="156.08" y="191.38" width="1.8" height="1.8" fill="#b26ac6"/>
<rect x="152.98" y="217.96" width="1.8" height="1.8" fill="#d9a21c"/>
<rect x="156.08" y="217.96" width="1.8" height="1.8" fill="#d9a21c"/>
<rect x="161" y="194.58" width="1.8" height="1.8" fill="#b26ac6"/>
<rect x="164.1" y="194.58" width="1.8" height="1.8" fill="#b26ac6"/>
<rect x="161" y="217.96" width="1.8" height="1.8" fill="#d9a21c"/>
<rect x="164.1" y="217.96" width="1.8" height="1.8" fill="#d9a21c"/>
<rect x="169.02" y="194.58" width="1.8" height="1.8" fill="#b26ac6"/>
<rect x="172.12" y="194.58" width="1.8" height="1.8" fill="#b26ac6"/>
<rect x="169.02" y="217.96" width="1.8" height="1.8" fill="#d9a21c"/>
<rect x="172.12" y="217.96" width="1.8" height="1.8" fill="#d9a21c"/>
<rect x="177.04" y="194.58" width="1.8" height="1.8" fill="#b26ac6"/>
<rect x="180.14" y="194.58" width="1.8" height="1.8" fill="#b26ac6"/>
<rect x="177.04" y="217.96" width="1.8" height="1.8" fill="#d9a21c"/>
<rect x="180.14" y="217.96" width="1.8" height="1.8" fill="#d9a21c"/>
<rect x="185.06" y="194.58" width="1.8" height="1.8" fill="#b26ac6"/>
<rect x="188.16" y="194.58" width="1.8" height="1.8" fill="#b26ac6"/>
<rect x="185.06" y="217.96" width="1.8" height="1.8" fill="#d9a21c"/>
<rect x="188.16" y="217.96" width="1.8" height="1.8" fill="#d9a21c"/>
<rect x="193.08" y="194.58" width="1.8" height="1.8" fill="#b26ac6"/>
<rect x="196.18" y="194.58" width="1.8" height="1.8" fill="#b26ac6"/>
<rect x="193.08" y="217.96" width="1.8" height="1.8" fill="#d9a21c"/>
<rect x="196.18" y="217.96" width="1.8" height="1.8" fill="#d9a21c"/>
<rect x="201.1" y="194.58" width="1.8" height="1.8" fill="#b26ac6"/>
<rect x="204.2" y="194.58" width="1.8" height="1.8" fill="#b26ac6"/>
<rect x="201.1" y="217.96" width="1.8" height="1.8" fill="#d9a21c"/>
<rect x="204.2" y="217.96" width="1.8" height="1.8" fill="#d9a21c"/>
<rect x="209.12" y="194.58" width="1.8" height="1.8" fill="#b26ac6"/>
<rect x="212.22" y="194.58" width="1.8" height="1.8" fill="#b26ac6"/>
<rect x="209.12" y="217.96" width="1.8" height="1.8" fill="#d9a21c"/>
<rect x="212.22" y="217.96" width="1.8" height="1.8" fill="#d9a21c"/>
<rect x="217.14" y="194.58" width="1.8" height="1.8" fill="#b26ac6"/>
<rect x="220.24" y="194.58" width="1.8" height="1.8" fill="#b26ac6"/>
<rect x="217.14" y="217.96" width="1.8" height="1.8" fill="#d9a21c"/>
<rect x="220.24" y="217.96" width="1.8" height="1.8" fill="#d9a21c"/>
<rect x="225.16" y="194.58" width="1.8" height="1.8" fill="#b26ac6"/>
<rect x="228.26" y="194.58" width="1.8" height="1.8" fill="#b26ac6"/>
<rect x="225.16" y="217.96" width="1.8" height="1.8" fill="#d9a21c"/>
<rect x="228.26" y="217.96" width="1.8" height="1.8" fill="#d9a21c"/>
<rect x="233.18" y="194.58" width="1.8" height="1.8" fill="#b26ac6"/>
<rect x="236.28" y="194.58" width="1.8" height="1.8" fill="#b26ac6"/>
<rect x="233.18" y="217.96" width="1.8" height="1.8" fill="#d9a21c"/>
<rect x="236.28" y="217.96" width="1.8" height="1.8" fill="#d9a21c"/>
<rect x="241.2" y="194.58" width="1.8" height="1.8" fill="#b26ac6"/>
<rect x="244.3" y="194.58" width="1.8" height="1.8" fill="#b26ac6"/>
<rect x="241.2" y="217.96" width="1.8" height="1.8" fill="#d9a21c"/>
<rect x="244.3" y="217.96" width="1.8" height="1.8" fill="#d9a21c"/>
<rect x="249.22" y="194.58" width="1.8" height="1.8" fill="#b26ac6"/>
<rect x="252.32" y="194.58" width="1.8" height="1.8" fill="#b26ac6"/>
<rect x="249.22" y="217.96" width="1.8" height="1.8" fill="#d9a21c"/>
<rect x="252.32" y="217.96" width="1.8" height="1.8" fill="#d9a21c"/>
<rect x="257.24" y="194.58" width="1.8" height="1.8" fill="#b26ac6"/>
<rect x="260.34" y="194.58" width="1.8" height="1.8" fill="#b26ac6"/>
<rect x="257.24" y="217.96" width="1.8" height="1.8" fill="#d9a21c"/>
<rect x="260.34" y="217.96" width="1.8" height="1.8" fill="#d9a21c"/>
<rect x="265.26" y="194.58" width="1.8" height="1.8" fill="#b26ac6"/>
<rect x="268.36" y="194.58" width="1.8" height="1.8" fill="#b26ac6"/>
<rect x="265.26" y="217.96" width="1.8" height="1.8" fill="#d9a21c"/>
<rect x="268.36" y="217.96" width="1.8" height="1.8" fill="#d9a21c"/>
<rect x="273.28" y="194.58" width="1.8" height="1.8" fill="#b26ac6"/>
<rect x="276.38" y="194.58" width="1.8" height="1.8" fill="#b26ac6"/>
<rect x="273.28" y="217.96" width="1.8" height="1.8" fill="#d9a21c"/>
<rect x="276.38" y="217.96" width="1.8" height="1.8" fill="#d9a21c"/>
<rect x="281.3" y="194.58" width="1.8" height="1.8" fill="#b26ac6"/>
<rect x="284.4" y="194.58" width="1.8" height="1.8" fill="#b26ac6"/>
<rect x="281.3" y="217.96" width="1.8" height="1.8" fill="#d9a21c"/>
<rect x="284.4" y="217.96" width="1.8" height="1.8" fill="#d9a21c"/>
<rect x="289.32" y="194.58" width="1.8" height="1.8" fill="#b26ac6"/>
<rect x="292.42" y="194.58" width="1.8" height="1.8" fill="#b26ac6"/>
<rect x="289.32" y="217.96" width="1.8" height="1.8" fill="#d9a21c"/>
<rect x="292.42" y="217.96" width="1.8" height="1.8" fill="#d9a21c"/>
<rect x="297.34" y="194.58" width="1.8" height="1.8" fill="#b26ac6"/>
<rect x="300.44" y="194.58" width="1.8" height="1.8" fill="#b26ac6"/>
<rect x="297.34" y="217.96" width="1.8" height="1.8" fill="#d9a21c"/>
<rect x="300.44" y="217.96" width="1.8" height="1.8" fill="#d9a21c"/>
<rect x="305.36" y="194.58" width="1.8" height="1.8" fill="#b26ac6"/>
<rect x="308.46" y="194.58" width="1.8" height="1.8" fill="#b26ac6"/>
<rect x="305.36" y="217.96" width="1.8" height="1.8" fill="#d9a21c"/>
<rect x="308.46" y="217.96" width="1.8" height="1.8" fill="#d9a21c"/>
<rect x="313.38" y="194.58" width="1.8" height="1.8" fill="#b26ac6"/>
<rect x="316.48" y="194.58" width="1.8" height="1.8" fill="#b26ac6"/>
<rect x="313.38" y="217.96" width="1.8" height="1.8" fill="#d9a21c"/>
<rect x="316.48" y="217.96" width="1.8" height="1.8" fill="#d9a21c"/>
<rect x="321.4" y="194.58" width="1.8" height="1.8" fill="#b26ac6"/>
<rect x="324.5" y="194.58" width="1.8" height="1.8" fill="#b26ac6"/>
<rect x="321.4" y="217.96" width="1.8" height="1.8" fill="#d9a21c"/>
<rect x="324.5" y="217.96" width="1.8" height="1.8" fill="#d9a21c"/>
<rect x="329.42" y="194.58" width="1.8" height="1.8" fill="#b26ac6"/>
<rect x="332.52" y="194.58" width="1.8" height="1.8" fill="#b26ac6"/>
<rect x="329.42" y="217.96" width="1.8" height="1.8" fill="#d9a21c"/>
<rect x="332.52" y="217.96" width="1.8" height="1.8" fill="#d9a21c"/>
<rect x="337.44" y="194.58" width="1.8" height="1.8" fill="#b26ac6"/>
<rect x="340.54" y="194.58" width="1.8" height="1.8" fill="#b26ac6"/>
<rect x="337.44" y="217.96" width="1.8" height="1.8" fill="#d9a21c"/>
<rect x="340.54" y="217.96" width="1.8" height="1.8" fill="#d9a21c"/>
<rect x="345.46" y="194.58" width="1.8" height="1.8" fill="#b26ac6"/>
<rect x="348.56" y="194.58" width="1.8" height="1.8" fill="#b26ac6"/>
<rect x="345.46" y="217.96" width="1.8" height="1.8" fill="#d9a21c"/>
<rect x="348.56" y="217.96" width="1.8" height="1.8" fill="#d9a21c"/>
<rect x="353.48" y="194.58" width="1.8" height="1.8" fill="#b26ac6"/>
<rect x="356.58" y="194.58" width="1.8" height="1.8" fill="#b26ac6"/>
<rect x="353.48" y="217.96" width="1.8" height="1.8" fill="#d9a21c"/>
<rect x="356.58" y="217.96" width="1.8" height="1.8" fill="#d9a21c"/>
<rect x="361.5" y="194.58" width="1.8" height="1.8" fill="#b26ac6"/>
<rect x="364.6" y="194.58" width="1.8" height="1.8" fill="#b26ac6"/>
<rect x="361.5" y="217.96" width="1.8" height="1.8" fill="#d9a21c"/>
<rect x="364.6" y="217.96" width="1.8" height="1.8" fill="#d9a21c"/>
<rect x="369.52" y="194.58" width="1.8" height="1.8" fill="#b26ac6"/>
<rect x="372.62" y="194.58" width="1.8" height="1.8" fill="#b26ac6"/>
<rect x="369.52" y="217.96" width="1.8" height="1.8" fill="#d9a21c"/>
<rect x="372.62" y="217.96" width="1.8" height="1.8" fill="#d9a21c"/>
<rect x="377.54" y="194.58" width="1.8" height="1.8" fill="#b26ac6"/>
<rect x="380.64" y="194.58" width="1.8" height="1.8" fill="#b26ac6"/>
<rect x="377.54" y="217.96" width="1.8" height="1.8" fill="#d9a21c"/>
<rect x="380.64" y="217.96" width="1.8" height="1.8" fill="#d9a21c"/>
<rect x="385.56" y="194.58" width="1.8" height="1.8" fill="#b26ac6"/>
<rect x="388.66" y="194.58" width="1.8" height="1.8" fill="#b26ac6"/>
<rect x="385.56" y="217.96" width="1.8" height="1.8" fill="#d9a21c"/>
<rect x="388.66" y="217.96" width="1.8" height="1.8" fill="#d9a21c"/>
<rect x="393.58" y="194.58" width="1.8" height="1.8" fill="#b26ac6"/>
<rect x="396.68" y="194.58" width="1.8" height="1.8" fill="#b26ac6"/>
<rect x="393.58" y="217.96" width="1.8" height="1.8" fill="#d9a21c"/>
<rect x="396.68" y="217.96" width="1.8" height="1.8" fill="#d9a21c"/>
<rect x="401.6" y="194.58" width="1.8" height="1.8" fill="#b26ac6"/>
<rect x="404.7" y="194.58" width="1.8" height="1.8" fill="#b26ac6"/>
<rect x="401.6" y="217.96" width="1.8" height="1.8" fill="#d9a21c"/>
<rect x="404.7" y="217.96" width="1.8" height="1.8" fill="#d9a21c"/>
<rect x="409.62" y="194.58" width="1.8" height="1.8" fill="#b26ac6"/>
<rect x="412.72" y="194.58" width="1.8" height="1.8" fill="#b26ac6"/>
<rect x="409.62" y="217.96" width="1.8" height="1.8" fill="#d9a21c"/>
<rect x="412.72" y="217.96" width="1.8" height="1.8" fill="#d9a21c"/>
<rect x="417.64" y="194.58" width="1.8" height="1.8" fill="#b26ac6"/>
<rect x="420.74" y="194.58" width="1.8" height="1.8" fill="#b26ac6"/>
<rect x="417.64" y="217.96" width="1.8" height="1.8" fill="#d9a21c"/>
<rect x="420.74" y="217.96" width="1.8" height="1.8" fill="#d9a21c"/>
<rect x="56.74" y="350.6" width="1.8" height="1.8" fill="#d9a21c"/>
<rect x="59.84" y="353.8" width="1.8" height="1.8" fill="#d9a21c"/>
<rect x="64.76" y="353.8" width="1.8" height="1.8" fill="#d9a21c"/>
<rect x="67.86" y="353.8" width="1.8" height="1.8" fill="#d9a21c"/>
<rect x="72.78" y="353.8" width="1.8" height="1.8" fill="#d9a21c"/>
<rect x="75.88" y="353.8" width="1.8" height="1.8" fill="#d9a21c"/>
<rect x="80.8" y="353.8" width="1.8" height="1.8" fill="#d9a21c"/>
<rect x="83.9" y="350.6" width="1.8" height="1.8" fill="#d9a21c"/>
<rect x="88.82" y="350.6" width="1.8" height="1.8" fill="#d9a21c"/>
<rect x="91.92" y="350.6" width="1.8" height="1.8" fill="#d9a21c"/>
<rect x="96.84" y="350.6" width="1.8" height="1.8" fill="#d9a21c"/>
<rect x="99.94" y="350.6" width="1.8" height="1.8" fill="#d9a21c"/>
<rect x="104.86" y="350.6" width="1.8" height="1.8" fill="#d9a21c"/>
<rect x="107.96" y="353.8" width="1.8" height="1.8" fill="#d9a21c"/>
<rect x="112.88" y="353.8" width="1.8" height="1.8" fill="#d9a21c"/>
<rect x="115.98" y="353.8" width="1.8" height="1.8" fill="#d9a21c"/>
<rect x="120.9" y="350.6" width="1.8" height="1.8" fill="#d9a21c"/>
<rect x="124" y="350.6" width="1.8" height="1.8" fill="#d9a21c"/>
<rect x="128.92" y="350.6" width="1.8" height="1.8" fill="#d9a21c"/>
<rect x="132.02" y="353.8" width="1.8" height="1.8" fill="#d9a21c"/>
<rect x="136.94" y="353.8" width="1.8" height="1.8" fill="#d9a21c"/>
<rect x="140.04" y="353.8" width="1.8" height="1.8" fill="#d9a21c"/>
<rect x="144.96" y="350.6" width="1.8" height="1.8" fill="#d9a21c"/>
<rect x="148.06" y="350.6" width="1.8" height="1.8" fill="#d9a21c"/>
<rect x="152.98" y="353.8" width="1.8" height="1.8" fill="#d9a21c"/>
<rect x="156.08" y="353.8" width="1.8" height="1.8" fill="#d9a21c"/>
<rect x="161" y="353.8" width="1.8" height="1.8" fill="#d9a21c"/>
<rect x="164.1" y="353.8" width="1.8" height="1.8" fill="#d9a21c"/>
<rect x="169.02" y="353.8" width="1.8" height="1.8" fill="#d9a21c"/>
<rect x="172.12" y="353.8" width="1.8" height="1.8" fill="#d9a21c"/>
<rect x="177.04" y="353.8" width="1.8" height="1.8" fill="#d9a21c"/>
<rect x="180.14" y="353.8" width="1.8" height="1.8" fill="#d9a21c"/>
<rect x="185.06" y="350.6" width="1.8" height="1.8" fill="#d9a21c"/>
<rect x="188.16" y="350.6" width="1.8" height="1.8" fill="#d9a21c"/>
<rect x="193.08" y="350.6" width="1.8" height="1.8" fill="#d9a21c"/>
<rect x="196.18" y="350.6" width="1.8" height="1.8" fill="#d9a21c"/>
<rect x="201.1" y="353.8" width="1.8" height="1.8" fill="#d9a21c"/>
<rect x="204.2" y="350.6" width="1.8" height="1.8" fill="#d9a21c"/>
<rect x="209.12" y="350.6" width="1.8" height="1.8" fill="#d9a21c"/>
<rect x="212.22" y="350.6" width="1.8" height="1.8" fill="#d9a21c"/>
<rect x="217.14" y="353.8" width="1.8" height="1.8" fill="#d9a21c"/>
<rect x="220.24" y="350.6" width="1.8" height="1.8" fill="#d9a21c"/>
<rect x="225.16" y="350.6" width="1.8" height="1.8" fill="#d9a21c"/>
<rect x="228.26" y="350.6" width="1.8" height="1.8" fill="#d9a21c"/>
<rect x="233.18" y="353.8" width="1.8" height="1.8" fill="#d9a21c"/>
<rect x="236.28" y="353.8" width="1.8" height="1.8" fill="#d9a21c"/>
<rect x="241.2" y="353.8" width="1.8" height="1.8" fill="#d9a21c"/>
<rect x="244.3" y="353.8" width="1.8" height="1.8" fill="#d9a21c"/>
<rect x="249.22" y="350.6" width="1.8" height="1.8" fill="#d9a21c"/>
<rect x="252.32" y="353.8" width="1.8" height="1.8" fill="#d9a21c"/>
<rect x="257.24" y="353.8" width="1.8" height="1.8" fill="#d9a21c"/>
<rect x="260.34" y="353.8" width="1.8" height="1.8" fill="#d9a21c"/>
<rect x="265.26" y="353.8" width="1.8" height="1.8" fill="#d9a21c"/>
<rect x="268.36" y="350.6" width="1.8" height="1.8" fill="#d9a21c"/>
<rect x="273.28" y="353.8" width="1.8" height="1.8" fill="#d9a21c"/>
<rect x="276.38" y="353.8" width="1.8" height="1.8" fill="#d9a21c"/>
<rect x="281.3" y="350.6" width="1.8" height="1.8" fill="#d9a21c"/>
<rect x="284.4" y="350.6" width="1.8" height="1.8" fill="#d9a21c"/>
<rect x="289.32" y="353.8" width="1.8" height="1.8" fill="#d9a21c"/>
<rect x="292.42" y="353.8" width="1.8" height="1.8" fill="#d9a21c"/>
<rect x="297.34" y="350.6" width="1.8" height="1.8" fill="#d9a21c"/>
<rect x="300.44" y="353.8" width="1.8" height="1.8" fill="#d9a21c"/>
<rect x="305.36" y="353.8" width="1.8" height="1.8" fill="#d9a21c"/>
<rect x="308.46" y="353.8" width="1.8" height="1.8" fill="#d9a21c"/>
<rect x="313.38" y="353.8" width="1.8" height="1.8" fill="#d9a21c"/>
<rect x="316.48" y="353.8" width="1.8" height="1.8" fill="#d9a21c"/>
<rect x="321.4" y="353.8" width="1.8" height="1.8" fill="#d9a21c"/>
<rect x="324.5" y="353.8" width="1.8" height="1.8" fill="#d9a21c"/>
<rect x="329.42" y="353.8" width="1.8" height="1.8" fill="#d9a21c"/>
<rect x="332.52" y="353.8" width="1.8" height="1.8" fill="#d9a21c"/>
<rect x="337.44" y="353.8" width="1.8" height="1.8" fill="#d9a21c"/>
<rect x="340.54" y="353.8" width="1.8" height="1.8" fill="#d9a21c"/>
<rect x="345.46" y="353.8" width="1.8" height="1.8" fill="#d9a21c"/>
<rect x="348.56" y="350.6" width="1.8" height="1.8" fill="#d9a21c"/>
<rect x="353.48" y="353.8" width="1.8" height="1.8" fill="#d9a21c"/>
<rect x="356.58" y="353.8" width="1.8" height="1.8" fill="#d9a21c"/>
<rect x="361.5" y="353.8" width="1.8" height="1.8" fill="#d9a21c"/>
<rect x="364.6" y="353.8" width="1.8" height="1.8" fill="#d9a21c"/>
<rect x="249.22" y="313.44" width="1.8" height="1.8" fill="#b26ac6"/>
<rect x="249.22" y="316.64" width="1.8" height="1.8" fill="#b26ac6"/>
<rect x="249.22" y="319.84" width="1.8" height="1.8" fill="#b26ac6"/>
<rect x="244.3" y="327.22" width="1.8" height="1.8" fill="#b26ac6"/>
<rect x="244.3" y="330.42" width="1.8" height="1.8" fill="#b26ac6"/>
<rect x="244.3" y="333.62" width="1.8" height="1.8" fill="#b26ac6"/>
<rect x="244.3" y="336.82" width="1.8" height="1.8" fill="#b26ac6"/>
<rect x="249.22" y="327.22" width="1.8" height="1.8" fill="#b26ac6"/>
<rect x="249.22" y="330.42" width="1.8" height="1.8" fill="#b26ac6"/>
<rect x="252.32" y="333.62" width="1.8" height="1.8" fill="#b26ac6"/>
<rect x="252.32" y="336.82" width="1.8" height="1.8" fill="#b26ac6"/>
</svg>
<span style="left:16.04px;top:2.5px;color:#d0cfcc">CPU</span>
<span style="left:48.12px;top:2.5px;color:#d0cfcc">─</span>
<span style="left:64.16px;top:2.5px;color:#d0cfcc">0.82</span>
<span style="left:104.26px;top:2.5px;color:#d0cfcc">1.00</span>
<span style="left:144.36px;top:2.5px;color:#d0cfcc">1.25</span>
<span style="left:8.02px;top:19.48px">100%</span>
<span style="left:24.06px;top:53.44px">0%</span>
<span style="left:24.06px;top:87.4px">60s</span>
<span style="left:609.52px;top:87.4px">0s</span>
<span style="left:649.62px;top:19.48px;color:#487cd2">CPU</span>
<span style="left:713.78px;top:19.48px;color:#487cd2">Use%</span>
<span style="left:649.62px;top:53.44px;color:#17305c">All</span>
<span style="left:649.62px;top:70.42px;color:#c8303c">AVG</span>
<span style="left:713.78px;top:70.42px;color:#c8303c">2%</span>
<span style="left:649.62px;top:87.4px;color:#b872cc">CPU0</span>
<span style="left:713.78px;top:87.4px;color:#b872cc">1%</span>
<span style="left:16.04px;top:121.36px;color:#d0cfcc">Memory</span>
<span style="left:8.02px;top:138.34px">100%</span>
<span style="left:24.06px;top:206.26px">0%</span>
<span style="left:24.06px;top:240.22px">60s</span>
<span style="left:401px;top:240.22px">0s</span>
<span style="left:449.12px;top:121.36px;color:#d0cfcc">Temperatures</span>
<span style="left:441.1px;top:138.34px;color:#487cd2">Sensor</span>
<span style="left:641.6px;top:138.34px;color:#487cd2">Temp</span>
<span style="left:441.1px;top:155.32px">amdgpu:</span>
<span style="left:505.26px;top:155.32px">edge</span>
<span style="left:641.6px;top:155.32px">48°C</span>
<span style="left:449.12px;top:189.28px;color:#d0cfcc">Disk</span>
<span style="left:441.1px;top:206.26px;color:#487cd2">Disk</span>
<span style="left:521.3px;top:206.26px;color:#487cd2">Mount</span>
<span style="left:601.5px;top:206.26px;color:#487cd2">Used</span>
<span style="left:641.6px;top:206.26px;color:#487cd2">Free</span>
<span style="left:697.74px;top:206.26px;color:#487cd2">Total</span>
<span style="left:441.1px;top:223.24px">/dev/nvm…</span>
<span style="left:521.3px;top:223.24px">/boot/efi</span>
<span style="left:601.5px;top:223.24px">2%</span>
<span style="left:641.6px;top:223.24px">613MB</span>
<span style="left:697.74px;top:223.24px">628MB</span>
<span style="left:441.1px;top:240.22px">/dev/nvm…</span>
<span style="left:521.3px;top:240.22px">/boot</span>
<span style="left:601.5px;top:240.22px">22%</span>
<span style="left:641.6px;top:240.22px">724MB</span>
<span style="left:697.74px;top:240.22px">1GB</span>
<span style="left:16.04px;top:274.18px;color:#d0cfcc">Network</span>
<span style="left:24.06px;top:291.16px">6.8</span>
<span style="left:24.06px;top:308.14px">4.5</span>
<span style="left:24.06px;top:325.12px">2.3</span>
<span style="left:24.06px;top:342.1px">0Mb</span>
<span style="left:32.08px;top:376.06px">60s</span>
<span style="left:344.86px;top:376.06px">0s</span>
<span style="left:392.98px;top:274.18px;color:#d0cfcc">Processes</span>
<span style="left:384.96px;top:291.16px;color:#487cd2">PID(p)</span>
<span style="left:465.16px;top:291.16px;color:#487cd2">Name(n)</span>
<span style="left:593.48px;top:291.16px;color:#487cd2">CPU%(c)▼</span>
<span style="left:673.68px;top:291.16px;color:#487cd2">Mem%(m)</span>
<span style="left:384.96px;top:325.12px">20419</span>
<span style="left:465.16px;top:325.12px">obs</span>
<span style="left:593.48px;top:325.12px">0.5%</span>
<span style="left:673.68px;top:325.12px">0.9%</span>
<span style="left:384.96px;top:342.1px">2562</span>
<span style="left:465.16px;top:342.1px">firefox</span>
<span style="left:593.48px;top:342.1px">0.2%</span>
<span style="left:673.68px;top:342.1px">2.2%</span>
<span style="left:384.96px;top:359.08px">36737</span>
<span style="left:465.16px;top:359.08px">btm</span>
<span style="left:593.48px;top:359.08px">0.2%</span>
<span style="left:673.68px;top:359.08px">0.0%</span>
<span style="left:384.96px;top:376.06px">2946</span>
<span style="left:465.16px;top:376.06px">firefox</span>
<span style="left:593.48px;top:376.06px">0.1%</span>
<span style="left:673.68px;top:376.06px">1.2%</span>
</div>
<div class="sb" style="left:763.6px;top:23.8px;width:4.5px;height:405.8px;background:#a2a2a2"></div>
</div>
</body></html>
